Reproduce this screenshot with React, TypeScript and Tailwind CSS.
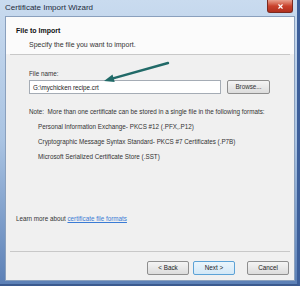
import { X } from "lucide-react";

const font = { fontFamily: '"Liberation Sans", Arial, sans-serif' };

const FORMATS = [
  "Personal Information Exchange- PKCS #12 (.PFX,.P12)",
  "Cryptographic Message Syntax Standard- PKCS #7 Certificates (.P7B)",
  "Microsoft Serialized Certificate Store (.SST)",
];

function WinButton({ label, active }: { label: string; active?: boolean }) {
  return (
    <button
      className={`h-[14px] w-[42px] rounded-[2px] border text-[6.3px] text-[#222] leading-none ${
        active
          ? "border-[#5ca2d6] bg-gradient-to-b from-[#eaf5fc] to-[#d3e8f7]"
          : "border-[#8e8e8e] bg-gradient-to-b from-[#f4f4f4] to-[#dcdcdc]"
      }`}
    >
      {label}
    </button>
  );
}

export default function App() {
  return (
    <div
      className="relative w-[300px] h-[286px] flex flex-col bg-gradient-to-b from-[#c9dbef] via-[#a9c3e2] to-[#5c80b6] border-r-[3px] border-r-[#3d5f9a] border-b-[2px] border-b-[#3b5a8f] overflow-hidden"
      style={font}
    >
      {/* title bar */}
      <div className="h-[16px] flex items-center pl-[5px] pr-[4px] shrink-0">
        <span className="text-[8px] text-[#1e2b3c] flex-1">Certificate Import Wizard</span>
        <div className="self-start h-[13px] w-[26px] rounded-b-[3px] border border-[#7a2a20] border-t-0 bg-gradient-to-b from-[#e8a08e] via-[#c9412c] to-[#b0301e] flex items-center justify-center">
          <X className="w-[7px] h-[7px] text-white" strokeWidth={4} />
        </div>
      </div>

      {/* client area */}
      <div className="flex-1 ml-[5px] mr-[2px] mb-[3px] flex flex-col bg-[#f0f0f0] border border-[#8aa0bd]">
        <div className="h-[37px] bg-[#fbfbfb] pl-[10px] pt-[9px]">
          <div className="text-[7px] font-bold text-[#111]">File to Import</div>
          <div className="text-[7px] text-[#333] pl-[13px] mt-[3px]">Specify the file you want to import.</div>
        </div>
        <div className="mx-[4px] h-[1px] bg-[#c8c8c8]" />

        <div className="relative flex-1 flex flex-col pl-[23px] pr-[10px]">
          <div className="text-[6.3px] text-[#333] mt-[14px]">File name:</div>
          <div className="flex items-center mt-[2px] gap-[6px]">
            <div className="h-[14px] w-[192px] bg-white border border-[#a5acb5] flex items-center pl-[3px] text-[6.3px] text-[#222]">
              G:\mychicken recipe.crt
            </div>
            <button className="h-[14px] w-[43px] rounded-[2px] border border-[#8e8e8e] bg-gradient-to-b from-[#f4f4f4] to-[#dcdcdc] text-[6.3px] text-[#333] leading-none">
              Browse...
            </button>
          </div>

          <div className="text-[6.3px] text-[#333] mt-[13px] whitespace-nowrap">
            Note:&nbsp; More than one certificate can be stored in a single file in the following formats:
          </div>
          <div className="pl-[9px] mt-[6px] flex flex-col gap-[8px]">
            {FORMATS.map(f => (
              <div key={f} className="text-[6.3px] text-[#333] leading-[7px]">{f}</div>
            ))}
          </div>

          <div className="mt-auto mb-[28px] -ml-[13px] text-[6.3px] text-[#333]">
            Learn more about <span className="text-[#3a7bd5] underline">certificate file formats</span>
          </div>

          {/* annotation arrow drawn over the form */}
          <svg className="absolute left-[94px] top-[4px]" width="72" height="26" viewBox="0 0 72 26">
            <line x1="68" y1="4" x2="13" y2="19.3" stroke="#216a68" strokeWidth="2.4" strokeLinecap="round" />
            <polygon points="4,22 14.7,23.1 12.5,15.4" fill="#216a68" />
          </svg>
        </div>

        <div className="mx-[4px] h-[1px] bg-[#c8c8c8]" />
        <div className="h-[28px] flex items-start pt-[9px] justify-end gap-[4px] pr-[5px]">
          <WinButton label="< Back" />
          <WinButton label="Next >" active />
          <div className="w-[4px]" />
          <WinButton label="Cancel" />
        </div>
      </div>
    </div>
  );
}
